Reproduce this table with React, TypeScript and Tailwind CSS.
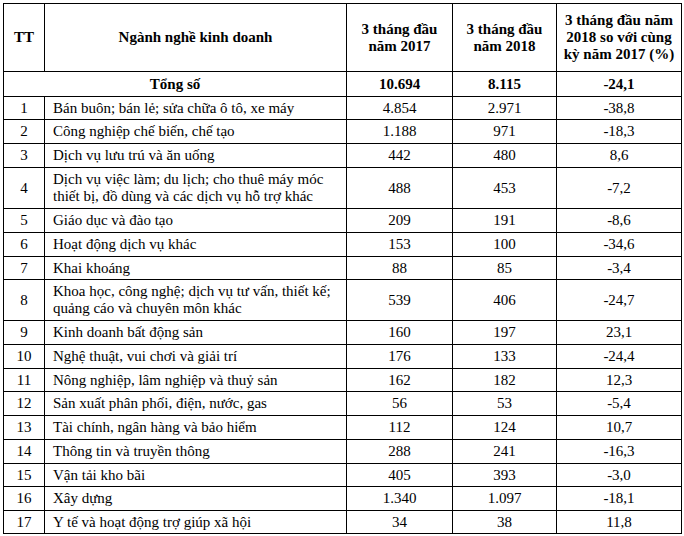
import React from "react";

type Row = [string, string[], string, string, string, string];

const rows: Row[] = [
  ["1", ["Bán buôn; bán lẻ; sửa chữa ô tô, xe máy"], "4.854", "2.971", "-38,8", "h-[23px]"],
  ["2", ["Công nghiệp chế biến, chế tạo"], "1.188", "971", "-18,3", "h-[24px]"],
  ["3", ["Dịch vụ lưu trú và ăn uống"], "442", "480", "8,6", "h-[24px]"],
  ["4", ["Dịch vụ việc làm; du lịch; cho thuê máy móc", "thiết bị, đồ dùng và các dịch vụ hỗ trợ khác"], "488", "453", "-7,2", "h-[41px]"],
  ["5", ["Giáo dục và đào tạo"], "209", "191", "-8,6", "h-[24px]"],
  ["6", ["Hoạt động dịch vụ khác"], "153", "100", "-34,6", "h-[24px]"],
  ["7", ["Khai khoáng"], "88", "85", "-3,4", "h-[23px]"],
  ["8", ["Khoa học, công nghệ; dịch vụ tư vấn, thiết kế;", "quảng cáo và chuyên môn khác"], "539", "406", "-24,7", "h-[41px]"],
  ["9", ["Kinh doanh bất động sản"], "160", "197", "23,1", "h-[24px]"],
  ["10", ["Nghệ thuật, vui chơi và giải trí"], "176", "133", "-24,4", "h-[24px]"],
  ["11", ["Nông nghiệp, lâm nghiệp và thuỷ sản"], "162", "182", "12,3", "h-[23px]"],
  ["12", ["Sản xuất phân phối, điện, nước, gas"], "56", "53", "-5,4", "h-[24px]"],
  ["13", ["Tài chính, ngân hàng và bảo hiểm"], "112", "124", "10,7", "h-[24px]"],
  ["14", ["Thông tin và truyền thông"], "288", "241", "-16,3", "h-[24px]"],
  ["15", ["Vận tải kho bãi"], "405", "393", "-3,0", "h-[23px]"],
  ["16", ["Xây dựng"], "1.340", "1.097", "-18,1", "h-[24px]"],
  ["17", ["Y tế và hoạt động trợ giúp xã hội"], "34", "38", "11,8", "h-[23px]"],
];

const cell =
  "border border-black p-0 align-middle text-black [font-family:Liberation_Serif,Times_New_Roman,serif] text-[15px] leading-[17px]";

export default function App() {
  return (
    <div className="w-[684px] h-[536px] bg-white pt-[3px] pl-[3px] [font-family:Liberation_Serif,Times_New_Roman,serif]">
      <table className="table-fixed border-collapse w-[678px] [font-family:Liberation_Serif,Times_New_Roman,serif] text-[15px]">
        <colgroup>
          <col className="w-[41px]" />
          <col className="w-[302px]" />
          <col className="w-[106px]" />
          <col className="w-[104px]" />
          <col className="w-[125px]" />
        </colgroup>
        <thead>
          <tr className="h-[68px]">
            <th className={`${cell} font-bold text-center`}>TT</th>
            <th className={`${cell} font-bold text-center`}>Ngành nghề kinh doanh</th>
            <th className={`${cell} font-bold text-center`}>
              3 tháng đầu
              <br />
              năm 2017
            </th>
            <th className={`${cell} font-bold text-center`}>
              3 tháng đầu
              <br />
              năm 2018
            </th>
            <th className={`${cell} font-bold text-center`}>
              3 tháng đầu năm
              <br />
              2018 so với cùng
              <br />
              kỳ năm 2017 (%)
            </th>
          </tr>
        </thead>
        <tbody>
          <tr className="h-[25px]">
            <td colSpan={2} className={`${cell} font-bold text-center`}>Tổng số</td>
            <td className={`${cell} font-bold text-center`}>10.694</td>
            <td className={`${cell} font-bold text-center`}>8.115</td>
            <td className={`${cell} font-bold text-center`}>-24,1</td>
          </tr>
          {rows.map((r) => (
            <tr key={r[0]} className={r[5]}>
              <td className={`${cell} text-center`}>{r[0]}</td>
              <td className={`${cell} text-left pl-[8px] pr-[2px] whitespace-nowrap`}>
                {r[1].map((line, i) => (
                  <React.Fragment key={i}>
                    {i > 0 && <br />}
                    {line}
                  </React.Fragment>
                ))}
              </td>
              <td className={`${cell} text-center`}>{r[2]}</td>
              <td className={`${cell} text-center`}>{r[3]}</td>
              <td className={`${cell} text-center`}>{r[4]}</td>
            </tr>
          ))}
        </tbody>
      </table>
    </div>
  );
}
